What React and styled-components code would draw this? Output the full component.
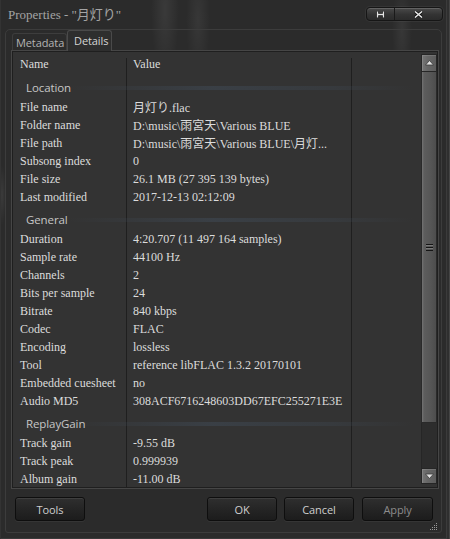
import React from "react";
import styled, { createGlobalStyle } from "styled-components";

const serif = `"Liberation Serif", "Noto Sans CJK TC", serif`;
const sans = `"Open Sans", "Noto Sans", "Noto Sans CJK TC", sans-serif`;

const GlobalStyle = createGlobalStyle`
  html, body {
    margin: 0;
    padding: 0;
    background: #2b2b2b;
  }
  #root {
    width: 450px;
    height: 539px;
  }
`;

const Window = styled.div`
  position: relative;
  width: 450px;
  height: 539px;
  box-sizing: border-box;
  display: flex;
  flex-direction: column;
  overflow: hidden;
  background:
    radial-gradient(ellipse 14px 70px at 165px 10px, rgba(255, 255, 255, 0.07), transparent),
    radial-gradient(ellipse 12px 60px at 198px 20px, rgba(255, 255, 255, 0.06), transparent),
    radial-gradient(ellipse 10px 50px at 402px 30px, rgba(255, 255, 255, 0.06), transparent),
    radial-gradient(ellipse 4px 30px at 2px 195px, rgba(255, 255, 255, 0.08), transparent),
    #2b2b2b;
  box-shadow:
    inset -1px 0 0 #454545,
    inset -3px 0 0 #2f2f2f,
    inset -4px 0 0 #3b3b3b,
    inset 1px 0 0 #333,
    inset 0 -1px 0 #3a3a3a;
`;

const TitleBar = styled.div`
  height: 29px;
  flex: none;
  display: flex;
  align-items: flex-start;
  padding: 0 7px 0 8px;
`;

const Title = styled.div`
  margin-top: 7px;
  font-family: ${serif};
  font-size: 13px;
  line-height: 16px;
  color: #a4a4a4;
  white-space: nowrap;
`;

const CaptionGroup = styled.div`
  margin: 7px 0 0 auto;
  width: 75px;
  height: 12px;
  display: flex;
  border: 1px solid #161616;
  border-radius: 4px;
  background: linear-gradient(#4a4a4a, #333 55%, #2b2b2b);
  box-shadow: inset 0 1px 0 rgba(255, 255, 255, 0.14), 0 0 0 1px rgba(255, 255, 255, 0.05);
  overflow: hidden;
`;

const CaptionButton = styled.div`
  width: ${(p) => p.$w}px;
  display: flex;
  align-items: center;
  justify-content: center;
  border-right: ${(p) => (p.$divider ? "1px solid #1a1a1a" : "none")};
`;

const Frame = styled.div`
  position: relative;
  flex: 1;
  margin: 0 8px 6px 5px;
  display: flex;
  flex-direction: column;
  border: 1px solid #3c3c3c;
  border-radius: 5px 5px 3px 3px;
`;

const TabRow = styled.div`
  height: 20px;
  display: flex;
  align-items: flex-end;
  padding-left: 6px;
`;

const Tab = styled.div`
  position: relative;
  z-index: ${(p) => (p.$active ? 2 : 1)};
  box-sizing: border-box;
  width: ${(p) => p.$w}px;
  height: ${(p) => (p.$active ? 21 : 17)}px;
  margin-bottom: ${(p) => (p.$active ? -1 : 0)}px;
  padding: ${(p) => (p.$active ? "2px 0 0 6px" : "1px 0 0 3px")};
  font-family: ${sans};
  font-size: 11px;
  letter-spacing: -0.1px;
  line-height: 15px;
  color: ${(p) => (p.$active ? "#d4d4d4" : "#b4b4b4")};
  background: ${(p) => (p.$active ? "#2e2e2e" : "#2b2b2b")};
  border: 1px solid ${(p) => (p.$active ? "#4a4a4a" : "#3d3d3d")};
  border-bottom: none;
  border-radius: 3px 3px 0 0;
`;

const Panel = styled.div`
  width: 428px;
  height: 439px;
  box-sizing: border-box;
  margin-left: 5px;
  display: flex;
  border: 1px solid #464646;
  background: #2e2e2e;
`;

const List = styled.div`
  flex: 1;
  display: flex;
  border: 1px solid #1f1f1f;
  background: #333;
  overflow: hidden;
`;

const Table = styled.div`
  flex: 1;
  overflow: hidden;
  background-image: linear-gradient(#1f1f1f, #1f1f1f), linear-gradient(#1f1f1f, #1f1f1f);
  background-size: 1px 100%, 1px 100%;
  background-position: 113px 6px, 338px 6px;
  background-repeat: no-repeat;
`;

const Row = styled.div`
  display: grid;
  grid-template-columns: 113px 225px 1fr;
  height: ${(p) => (p.$header ? 22 : 18)}px;
  padding-top: ${(p) => (p.$header ? 3 : 0)}px;
  box-sizing: border-box;
  align-items: center;
  font-family: ${serif};
  font-size: 12px;
  color: #dcdcdc;
  white-space: nowrap;
`;

const Cell = styled.div`
  padding-left: 7px;
  overflow: hidden;
`;

const GroupRow = styled.div`
  height: 24px;
  box-sizing: border-box;
  padding: 2px 0 0 13px;
  display: flex;
  align-items: center;
  font-family: ${sans};
  font-size: 11.5px;
  letter-spacing: -0.1px;
  color: #c6c6c6;
  background: linear-gradient(
      90deg,
      transparent 55px,
      rgba(70, 86, 104, 0.35) 200px,
      rgba(70, 86, 104, 0.2) 320px,
      transparent 400px
    )
    0 12px / 100% 4px no-repeat;
`;

const Scrollbar = styled.div`
  width: 16px;
  flex: none;
  display: flex;
  flex-direction: column;
  padding: 2px 0 3px;
`;

const ScrollButton = styled.div`
  height: ${(p) => p.$h}px;
  box-sizing: border-box;
  display: flex;
  justify-content: center;
  align-items: ${(p) => (p.$up ? "flex-start" : "center")};
  padding-top: ${(p) => (p.$up ? 5 : 0)}px;
  border: 1px solid #262626;
  background: linear-gradient(90deg, #767676, #666 40%, #5c5c5c);
  box-shadow: inset 1px 1px 0 rgba(255, 255, 255, 0.12);
`;

const Thumb = styled.div`
  height: 351px;
  box-sizing: border-box;
  display: flex;
  align-items: center;
  justify-content: center;
  border: 1px solid #2a2a2a;
  border-top: none;
  background: linear-gradient(90deg, #747474 0, #5d5d5d 2px, #565656 60%, #4d4d4d 100%);
`;

const Grip = styled.div`
  width: 7px;
  height: 7px;
  background: repeating-linear-gradient(#151515 0 1px, #7a7a7a 1px 2px, transparent 2px 3px);
`;

const Track = styled.div`
  flex: 1;
  background: #2d2d2d;
  border-left: 1px solid #262626;
`;

const ButtonRow = styled.div`
  margin-top: 8px;
  height: 24px;
  display: flex;
  padding: 0 8px 0 9px;
  gap: 7px;
`;

const Button = styled.div`
  width: ${(p) => p.$w || 70}px;
  margin-left: ${(p) => (p.$push ? "auto" : "0")};
  margin-right: ${(p) => (p.$gapAfter ? 1 : 0)}px;
  box-sizing: border-box;
  display: flex;
  align-items: center;
  justify-content: center;
  border: 1px solid #0e0e0e;
  border-radius: 3px;
  background: linear-gradient(#2f2f2f, #252525 50%, #1c1c1c);
  box-shadow: inset 0 1px 0 rgba(255, 255, 255, 0.08), 0 1px 0 rgba(255, 255, 255, 0.05);
  font-family: ${sans};
  font-size: 11px;
  letter-spacing: -0.1px;
  color: ${(p) => (p.$disabled ? "#8c8c8c" : "#cfcfcf")};
`;

const ResizeGrip = styled.svg`
  position: absolute;
  right: 3px;
  bottom: 1px;
`;

const sections = [
  {
    title: "Location",
    rows: [
      ["File name", "月灯り.flac"],
      ["Folder name", "D:\\music\\雨宮天\\Various BLUE"],
      ["File path", "D:\\music\\雨宮天\\Various BLUE\\月灯..."],
      ["Subsong index", "0"],
      ["File size", "26.1 MB (27 395 139 bytes)"],
      ["Last modified", "2017-12-13 02:12:09"],
    ],
  },
  {
    title: "General",
    rows: [
      ["Duration", "4:20.707 (11 497 164 samples)"],
      ["Sample rate", "44100 Hz"],
      ["Channels", "2"],
      ["Bits per sample", "24"],
      ["Bitrate", "840 kbps"],
      ["Codec", "FLAC"],
      ["Encoding", "lossless"],
      ["Tool", "reference libFLAC 1.3.2 20170101"],
      ["Embedded cuesheet", "no"],
      ["Audio MD5", "308ACF6716248603DD67EFC255271E3E"],
    ],
  },
  {
    title: "ReplayGain",
    rows: [
      ["Track gain", "-9.55 dB"],
      ["Track peak", "0.999939"],
      ["Album gain", "-11.00 dB"],
    ],
  },
];

const HelpGlyph = () => (
  <svg width="9" height="7" viewBox="0 0 9 7">
    <path d="M1.5 0.5v6M7.5 0.5v6M1.5 3.5h6" stroke="#111" strokeWidth="3" fill="none" />
    <path d="M1.5 0.5v6M7.5 0.5v6M1.5 3.5h6" stroke="#e4e4e4" strokeWidth="1.4" fill="none" />
  </svg>
);

const CloseGlyph = () => (
  <svg width="9" height="7" viewBox="0 0 9 7">
    <path d="M1 0.5l7 6M8 0.5l-7 6" stroke="#111" strokeWidth="3" fill="none" />
    <path d="M1 0.5l7 6M8 0.5l-7 6" stroke="#e8e8e8" strokeWidth="1.5" fill="none" />
  </svg>
);

const Arrow = ({ up }) => (
  <svg width="9" height="6" viewBox="0 0 9 6">
    <path
      d={up ? "M4.5 0.5L8.5 5H0.5z" : "M0.5 1H8.5L4.5 5.5z"}
      fill="#e2e2e2"
      stroke="#3a3a3a"
      strokeWidth="0.8"
    />
  </svg>
);

export default function App() {
  return (
    <>
      <GlobalStyle />
      <Window>
        <TitleBar>
          <Title>Properties - "月灯り"</Title>
          <CaptionGroup>
            <CaptionButton $w={27} $divider>
              <HelpGlyph />
            </CaptionButton>
            <CaptionButton $w={48}>
              <CloseGlyph />
            </CaptionButton>
          </CaptionGroup>
        </TitleBar>

        <Frame>
          <TabRow>
            <Tab $w={55}>Metadata</Tab>
            <Tab $w={45} $active>
              Details
            </Tab>
          </TabRow>

          <Panel>
            <List>
              <Table>
                <Row $header>
                  <Cell>Name</Cell>
                  <Cell>Value</Cell>
                  <Cell />
                </Row>
                {sections.map((s) => (
                  <React.Fragment key={s.title}>
                    <GroupRow>{s.title}</GroupRow>
                    {s.rows.map(([name, value]) => (
                      <Row key={name}>
                        <Cell>{name}</Cell>
                        <Cell>{value}</Cell>
                        <Cell />
                      </Row>
                    ))}
                  </React.Fragment>
                ))}
              </Table>
              <Scrollbar>
                <ScrollButton $h={18} $up>
                  <Arrow up />
                </ScrollButton>
                <Thumb>
                  <Grip />
                </Thumb>
                <Track />
                <ScrollButton $h={16}>
                  <Arrow />
                </ScrollButton>
              </Scrollbar>
            </List>
          </Panel>

          <ButtonRow>
            <Button>Tools</Button>
            <Button $push>OK</Button>
            <Button $gapAfter>Cancel</Button>
            <Button $w={71} $disabled>
              Apply
            </Button>
          </ButtonRow>

          <ResizeGrip width="8" height="8" viewBox="0 0 8 8">
            {[
              [6, 0],
              [4, 2],
              [6, 2],
              [2, 4],
              [4, 4],
              [6, 4],
              [0, 6],
              [2, 6],
              [4, 6],
              [6, 6],
            ].map(([x, y]) => (
              <rect key={`${x}-${y}`} x={x} y={y} width="1" height="1" fill="#9a9a9a" />
            ))}
          </ResizeGrip>
        </Frame>
      </Window>
    </>
  );
}
